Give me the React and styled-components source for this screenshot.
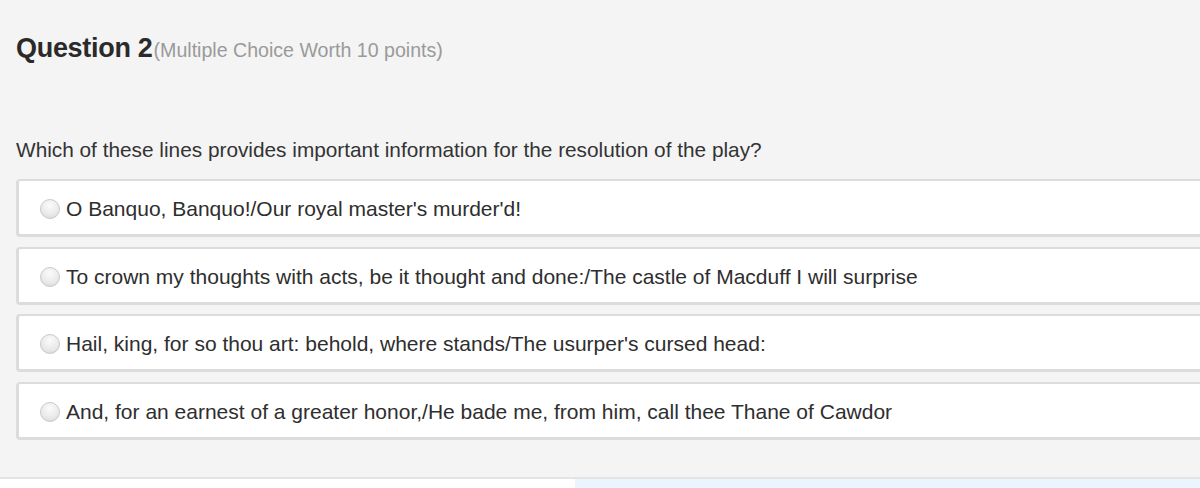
import React from "react";
import styled, { createGlobalStyle } from "styled-components";

const Global = createGlobalStyle`
  html, body { margin: 0; padding: 0; background: #ffffff; }
  body { font-family: "Liberation Sans", Arial, sans-serif; overflow: hidden; }
`;

const Page = styled.div`
  width: 1200px;
  height: 488px;
  display: flex;
  flex-direction: column;
  overflow: hidden;
`;

const Panel = styled.section`
  background: #f4f4f4;
  padding: 30px 0 0 16px;
  height: 447px;
  border-bottom: 2px solid #e4e4e4;
  display: flex;
  flex-direction: column;
`;

const Title = styled.h2`
  margin: 0;
  display: flex;
  align-items: baseline;
  font-weight: 700;
  font-size: 27px;
  letter-spacing: -0.3px;
  color: #2a2a2a;
  line-height: 36px;
`;

const Meta = styled.span`
  font-weight: 400;
  font-size: 19.6px;
  letter-spacing: 0;
  color: #9a9a9a;
  margin-left: 1px;
`;

const Prompt = styled.p`
  margin: 70px 0 17px;
  font-size: 20.8px;
  line-height: 24px;
  color: #333333;
`;

const Options = styled.div`
  display: flex;
  flex-direction: column;
  gap: 9.5px;
`;

const Option = styled.label`
  display: flex;
  align-items: center;
  gap: 6px;
  height: 50px;
  padding: 3px 0 0 21px;
  box-sizing: content-box;
  margin-right: -10px;
  background: #ffffff;
  border: 3px solid #dcdcdc;
  border-top-width: 2px;
  border-radius: 4px;
  font-size: 21px;
  color: #2e2e2e;
`;

const Radio = styled.span`
  flex: none;
  width: 20px;
  height: 20px;
  border-radius: 50%;
  border: 1px solid #c9c9c9;
  box-sizing: border-box;
  background: radial-gradient(circle at 50% 30%, #fbfbfb 0%, #e9e9e9 60%, #d4d4d4 100%);
`;

const Footer = styled.div`
  flex: 1;
  display: grid;
  grid-template-columns: 575px 1fr;
`;

const FooterBlue = styled.div`
  background: #eaf5fd;
`;

const options = [
  "O Banquo, Banquo!/Our royal master's murder'd!",
  "To crown my thoughts with acts, be it thought and done:/The castle of Macduff I will surprise",
  "Hail, king, for so thou art: behold, where stands/The usurper's cursed head:",
  "And, for an earnest of a greater honor,/He bade me, from him, call thee Thane of Cawdor",
];

export default function App() {
  return (
    <>
      <Global />
      <Page>
        <Panel>
          <Title>
            Question 2<Meta>(Multiple Choice Worth 10 points)</Meta>
          </Title>
          <Prompt>Which of these lines provides important information for the resolution of the play?</Prompt>
          <Options>
            {options.map((o) => (
              <Option key={o}>
                <Radio />
                {o}
              </Option>
            ))}
          </Options>
        </Panel>
        <Footer>
          <div />
          <FooterBlue />
        </Footer>
      </Page>
    </>
  );
}
